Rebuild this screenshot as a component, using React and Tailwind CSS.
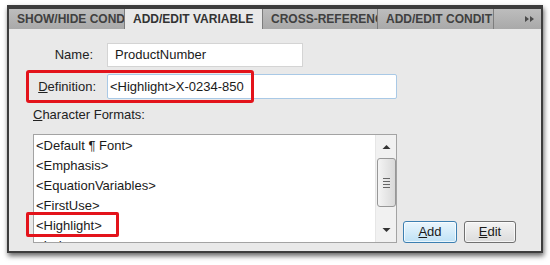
import React from "react";

const tabs = [
  { label: "SHOW/HIDE COND", w: "w-[116px]", active: false },
  { label: "ADD/EDIT VARIABLE", w: "w-[138px]", active: true },
  { label: "CROSS-REFERENCE", w: "w-[115px]", active: false },
  { label: "ADD/EDIT CONDIT", w: "w-[116px]", active: false },
];

const formats = [
  "<Default ¶ Font>",
  "<Emphasis>",
  "<EquationVariables>",
  "<FirstUse>",
  "<Highlight>",
  "<Index>",
];

function Tab({ label, w, active }) {
  return (
    <div
      className={`${w} h-full shrink-0 overflow-hidden whitespace-nowrap border-r border-[#7d7d7d] pl-[8px] text-[12px] font-bold leading-[20px] ${
        active ? "bg-[#e9e9e9] text-[#333]" : "bg-gradient-to-b from-[#bdbdbd] to-[#a9a9a9] text-[#404040]"
      }`}
    >
      {label}
    </div>
  );
}

function ScrollBar() {
  return (
    <div className="flex h-full w-[21px] flex-col items-center border-l border-[#e6e6e6] bg-[#f1f1f1]">
      <svg width="9" height="6" viewBox="0 0 9 6" className="mt-[9px]">
        <path d="M0.5 5 L4.5 1 L8.5 5 Z" fill="#333" />
      </svg>
      <div className="mt-[8px] flex h-[49px] w-[19px] flex-col items-center justify-center gap-[2px] rounded-[3px] border border-[#979797] bg-gradient-to-r from-[#f4f4f4] to-[#d9d9d9]">
        <div className="h-px w-[7px] bg-[#666]" />
        <div className="h-px w-[7px] bg-[#666]" />
        <div className="h-px w-[7px] bg-[#666]" />
        <div className="h-px w-[7px] bg-[#666]" />
      </div>
      <svg width="9" height="6" viewBox="0 0 9 6" className="mt-auto mb-[9px]">
        <path d="M0.5 1 L4.5 5 L8.5 1 Z" fill="#333" />
      </svg>
    </div>
  );
}

export default function App() {
  return (
    <div className="h-[265px] w-[550px] bg-white pl-[7px] pt-[5px] font-['Liberation_Sans',Arial,sans-serif]">
      <div className="relative h-[248px] w-[536px] border-2 border-t-4 border-[#3d3d3d] bg-[#e9e9e9] shadow-[1px_3px_5px_rgba(0,0,0,0.6)]">
        {/* tab bar */}
        <div className="flex h-[20px] bg-gradient-to-b from-[#bdbdbd] to-[#a9a9a9]">
          {tabs.map((t) => (
            <Tab key={t.label} {...t} />
          ))}
          <div className="flex flex-1 items-center justify-end pr-[6px]">
            <svg width="10" height="6" viewBox="0 0 10 6">
              <path d="M0 0 L4 3 L0 6 Z M5 0 L9 3 L5 6 Z" fill="#4a4a4a" />
            </svg>
          </div>
        </div>

        {/* body */}
        <div className="pt-[14px] text-[13px] text-[#222]">
          <div className="flex h-[24px] items-center">
            <div className="w-[98px] pr-[14px] text-right">Name:</div>
            <div className="flex h-[24px] w-[196px] items-center border border-[#d4d4d4] bg-white pl-[7px] text-[#1a1a1a]">
              ProductNumber
            </div>
          </div>

          <div className="mt-[7px] flex h-[25px] items-center">
            <div className="w-[98px] pr-[11px] text-right">
              <span className="underline">D</span>efinition:
            </div>
            <div className="flex h-[25px] w-[290px] items-center rounded-[2px] border border-[#a9c9e6] bg-white pl-[2px] text-[#1a1a1a]">
              &lt;Highlight&gt;X-0234-850
            </div>
          </div>

          <div className="mt-[8px] h-[16px] pl-[24px] leading-[16px]">
            <span className="underline">C</span>haracter Formats:
          </div>

          <div className="mt-[11px] flex items-end pl-[24px]">
            <div className="flex h-[109px] w-[364px] overflow-hidden border border-[#a3a3a3] bg-white">
              <div className="flex-1 overflow-hidden pl-[2px] pt-px">
                {formats.map((f) => (
                  <div key={f} className="h-[20px] whitespace-nowrap leading-[20px] text-[#1a1a1a]">
                    {f}
                  </div>
                ))}
              </div>
              <ScrollBar />
            </div>

            <button
              type="button"
              className="ml-[6px] h-[22px] w-[54px] rounded-[3px] border border-[#3c7fb1] bg-gradient-to-b from-[#eaf6fd] to-[#bfe2f6] text-[13px] leading-[20px] text-[#1a1a1a] shadow-[inset_0_0_0_1px_rgba(255,255,255,0.7)]"
            >
              <span className="underline">A</span>dd
            </button>
            <button
              type="button"
              className="ml-[7px] h-[22px] w-[52px] rounded-[3px] border border-[#707070] bg-gradient-to-b from-[#f3f3f3] to-[#dcdcdc] text-[13px] leading-[20px] text-[#1a1a1a] shadow-[inset_0_0_0_1px_rgba(255,255,255,0.7)]"
            >
              <span className="underline">E</span>dit
            </button>
          </div>
        </div>

        {/* red annotation boxes */}
        <div className="absolute left-[17px] top-[61px] h-[33px] w-[228px] rounded-[3px] border-[3px] border-[#e3131b]" />
        <div className="absolute left-[17px] top-[203px] h-[25px] w-[93px] rounded-[2px] border-[3px] border-[#e3131b]" />
      </div>
    </div>
  );
}
